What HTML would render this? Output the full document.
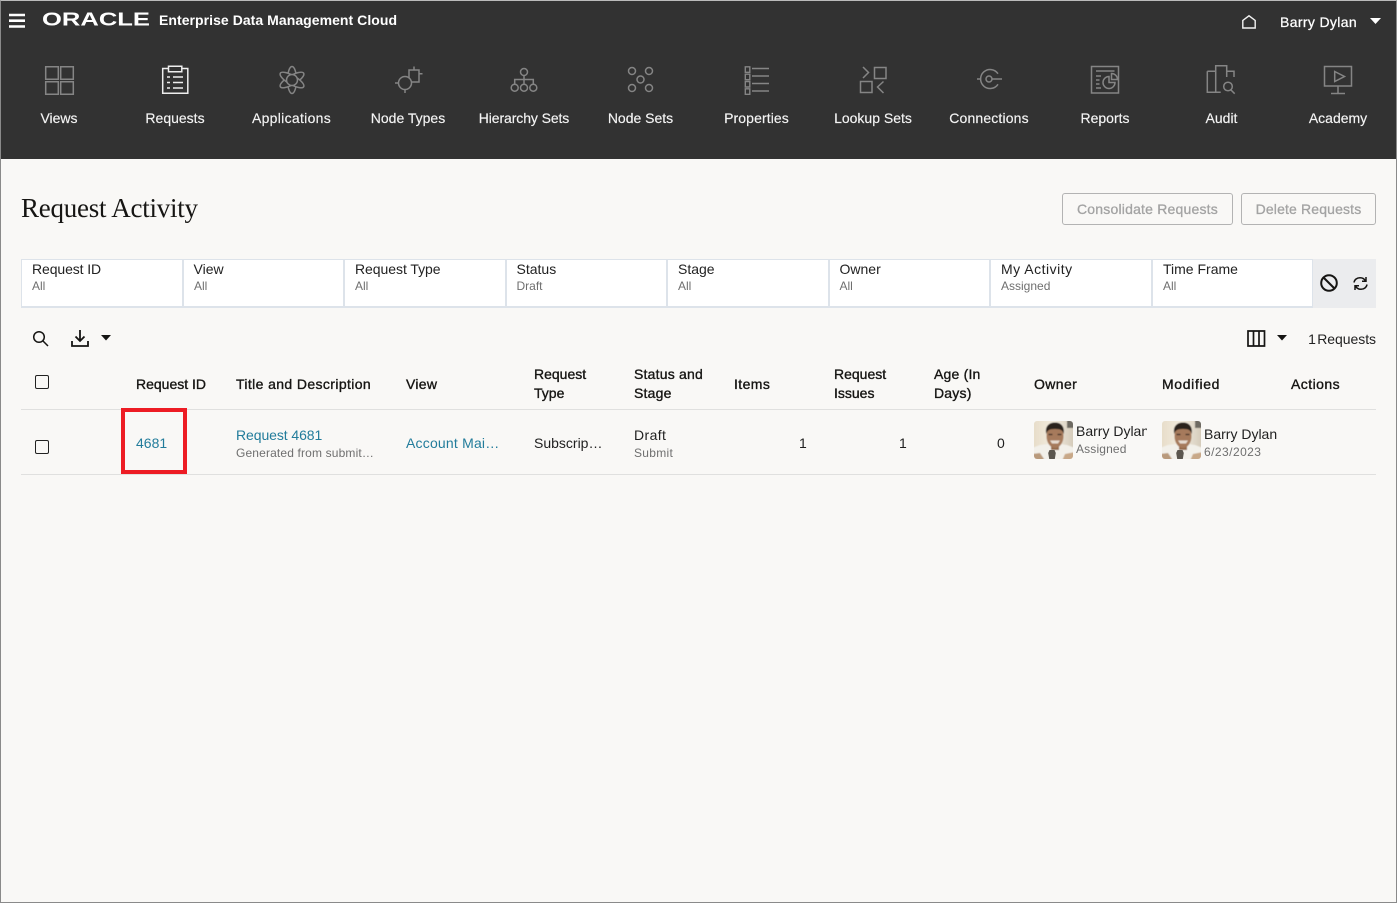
<!DOCTYPE html>
<html lang="en"><head><meta charset="utf-8"><title>Request Activity</title>
<style>
html,body{margin:0;padding:0;width:1397px;height:903px;overflow:hidden;background:#f9f8f6}
body{position:relative;font-family:"Liberation Sans",sans-serif;font-size:14px;color:#1f1f1f}
#frame{position:absolute;inset:0;border:1px solid #8a8a8a;border-top:1px solid #bbb;box-sizing:border-box;pointer-events:none;z-index:9}
#hdr{position:absolute;left:0;top:0;width:1397px;height:159px;background:#323232}
.t{position:absolute;white-space:nowrap;line-height:16px}
.w{color:#fff}
.c{transform:translateX(-50%)}
.nav{top:110px;color:#f4f4f4;font-size:14px;-webkit-text-stroke:.15px #f4f4f4}
svg{position:absolute;overflow:visible}
.ic{width:30px;height:30px;top:65px;fill:none;stroke:#858585;stroke-width:1.5}
.cell{position:absolute;top:259px;height:49px;background:#fff;border:1px solid #dde3ea;border-width:1px 1px 2px 1px;box-sizing:border-box}
.lb{top:261px;font-size:14px;color:#222}
.sb{top:278px;font-size:12px;color:#6f6f6f}
.h{font-size:14px;color:#161513;-webkit-text-stroke:.35px #161513}
.lnk{color:#227c9b}
.sub{font-size:12px;color:#6f6f6f;letter-spacing:.15px}
.btn{position:absolute;top:193px;height:32px;border:1px solid #b3b3b3;border-radius:3px;box-sizing:border-box;color:#a3a3a3;text-align:center;line-height:30px;font-size:14px;-webkit-text-stroke:.3px #a3a3a3}
.rule{position:absolute;left:21px;width:1355px;height:1px;background:#e0e0df}
.cb{position:absolute;left:35px;width:14px;height:14px;border:1.5px solid #222;border-radius:2px;box-sizing:border-box}
.clip{overflow:hidden}
</style></head><body>
<div id="hdr"></div>

<svg style="left:9px;top:13px" width="16" height="15"><path d="M0 2h16M0 7.700h16M0 13.500h16" stroke="#fff" stroke-width="2.600" fill="none"/></svg>
<svg style="left:42px;top:10px" width="110" height="18"><text x="0" y="15.500" font-family="Liberation Sans" font-weight="bold" font-size="18.500" fill="#fff" textLength="108" lengthAdjust="spacingAndGlyphs">ORACLE</text></svg>
<span class="t w" style="left:159px;top:12px;font-weight:bold;font-size:14px;letter-spacing:.05px">Enterprise Data Management Cloud</span>

<svg style="left:1242px;top:15px" width="14" height="14" fill="none" stroke="#f2f2f2" stroke-width="1.400"><path d="M.8 13V5.500L7 .8l6.200 4.700V13z"/></svg>
<span class="t w" style="left:1280px;top:14px;letter-spacing:.35px;-webkit-text-stroke:.25px #fff">Barry Dylan</span>
<svg style="left:1370px;top:18px" width="12" height="7"><path d="M0 0h11L5.500 6z" fill="#fff"/></svg>

<!-- nav icons -->
<svg class="ic" style="left:44px" viewBox="0 0 30 30"><path d="M1.700 1.700h12.600v12.600H1.700zM16.700 1.700h12.600v12.600H16.700zM1.700 16.700h12.600v12.600H1.700zM16.700 16.700h12.600v12.600H16.700z"/></svg>
<svg class="ic" style="left:160px;stroke:#eee" viewBox="0 0 30 30"><path d="M8.500 3.500H2.700v24.800h25.100V3.500h-5.800"/><path d="M8.500 1.200h13.300v5.600H8.500zM7 12h3M13 12h10M7 17.500h3M13 17.500h10M7 23h3M13 23h10"/></svg>
<svg class="ic" style="left:277px;fill:#323232" viewBox="0 0 30 30"><ellipse cx="15" cy="15" rx="4.500" ry="13.500"/><ellipse cx="15" cy="15" rx="4.500" ry="13.500" transform="rotate(60 15 15)"/><ellipse cx="15" cy="15" rx="4.500" ry="13.500" transform="rotate(120 15 15)"/><circle cx="15" cy="15" r="5.500"/></svg>
<svg class="ic" style="left:393px" viewBox="0 0 30 30"><circle cx="12" cy="18" r="6.500"/><path d="M2 18h3.500M12 24.500V28M16 13V5h10v12h-7M21 1.500V5M26 8.800h3.500"/></svg>
<svg class="ic" style="left:509px" viewBox="0 0 30 30"><circle cx="15" cy="7" r="3.500"/><circle cx="5.700" cy="22.700" r="3.500"/><circle cx="15" cy="22.700" r="3.500"/><circle cx="24.300" cy="22.700" r="3.500"/><path d="M15 10.500v8.700M5.700 19.200v-4.700h18.600v4.700"/></svg>
<svg class="ic" style="left:625px" viewBox="0 0 30 30"><circle cx="7" cy="6" r="3.500"/><circle cx="24" cy="6" r="3.500"/><circle cx="15.500" cy="14.500" r="3.500"/><circle cx="7" cy="23" r="3.500"/><circle cx="24" cy="23" r="3.500"/></svg>
<svg class="ic" style="left:742px" viewBox="0 0 30 30"><path d="M3.300 1.800h4.500v5.500H3.300zM3.300 9.200h4.500v5.500H3.300zM3.300 16.500h4.500V22H3.300zM3.300 23.800h4.500v5.500H3.300zM10 3.500h17M10 11h17M10 18.500h17M10 26h17" stroke-width="1.400"/></svg>
<svg class="ic" style="left:858px" viewBox="0 0 30 30"><path d="M16.500 2.500h11.500v11H16.500zM2.500 16.500h11.500v11H2.500zM5 2l5.500 5.500L5 13M25.500 16.500L19.500 22l6 6"/></svg>
<svg class="ic" style="left:974px" viewBox="0 0 30 30"><circle cx="15" cy="14" r="3"/><path d="M24 8.700A9.500 9.500 0 1 0 24 19.300M18 14h10M3 14h3"/></svg>
<svg class="ic" style="left:1090px" viewBox="0 0 30 30"><path d="M1.500 1.500h27v26.500h-27zM6 6h18.500M6 11h5M6 15h3.500M6 19h3.500M6 23h5"/><path d="M19 11.500a6 6 0 1 0 6 6h-6z"/><path d="M21.500 8.500v6h6a6 6 0 0 0-6-6z"/></svg>
<svg class="ic" style="left:1206px" viewBox="0 0 30 30"><path d="M1.300 6.300H9.700M1.300 6.300V27.300H14.700M9.700 27.300V.7H20.700V12M20.700 6.300H28V12"/><circle cx="22" cy="21.500" r="4.300"/><path d="M25 25l3.700 3.700"/></svg>
<svg class="ic" style="left:1323px" viewBox="0 0 30 30"><path d="M1.500 1.500h27v19.500h-27zM11.700 6.500l9.800 5-9.800 5zM15 21v7.500M8 28.500h14"/></svg>

<span class="t nav c" style="left:59px">Views</span>
<span class="t nav c" style="left:175px">Requests</span>
<span class="t nav c" style="left:291.500px;letter-spacing:.3px">Applications</span>
<span class="t nav c" style="left:408px">Node Types</span>
<span class="t nav c" style="left:524px;letter-spacing:-.1px">Hierarchy Sets</span>
<span class="t nav c" style="left:640.500px">Node Sets</span>
<span class="t nav c" style="left:756.500px;letter-spacing:.1px">Properties</span>
<span class="t nav c" style="left:873px">Lookup Sets</span>
<span class="t nav c" style="left:989px;letter-spacing:.15px">Connections</span>
<span class="t nav c" style="left:1105px">Reports</span>
<span class="t nav c" style="left:1221.500px">Audit</span>
<span class="t nav c" style="left:1338px">Academy</span>

<!-- title -->
<span class="t" style="left:21px;top:193px;line-height:30px;font-family:'Liberation Serif',serif;font-size:27px;letter-spacing:-.25px;color:#161513">Request Activity</span>
<div class="btn" style="left:1062px;width:171px;letter-spacing:.2px">Consolidate Requests</div>
<div class="btn" style="left:1241px;width:135px;letter-spacing:.15px">Delete Requests</div>

<!-- filter bar -->
<div style="position:absolute;left:1313px;top:259px;width:63px;height:49px;background:#ebecee"></div>
<div class="cell" style="left:21px;width:162px"></div>
<div class="cell" style="left:183px;width:161px"></div>
<div class="cell" style="left:344px;width:162px"></div>
<div class="cell" style="left:506px;width:161px"></div>
<div class="cell" style="left:667px;width:162px"></div>
<div class="cell" style="left:829px;width:161px"></div>
<div class="cell" style="left:990px;width:162px"></div>
<div class="cell" style="left:1152px;width:161px"></div>

<span class="t lb" style="left:32px;letter-spacing:-.1px">Request ID</span><span class="t sb" style="left:32px">All</span>
<span class="t lb" style="left:193.500px">View</span><span class="t sb" style="left:194px">All</span>
<span class="t lb" style="left:355px;letter-spacing:-.05px">Request Type</span><span class="t sb" style="left:355px">All</span>
<span class="t lb" style="left:516.500px">Status</span><span class="t sb" style="left:516.500px">Draft</span>
<span class="t lb" style="left:678px">Stage</span><span class="t sb" style="left:678px">All</span>
<span class="t lb" style="left:839.500px">Owner</span><span class="t sb" style="left:839.500px">All</span>
<span class="t lb" style="left:1001px;letter-spacing:.5px">My Activity</span><span class="t sb" style="left:1001px">Assigned</span>
<span class="t lb" style="left:1163px">Time Frame</span><span class="t sb" style="left:1163px">All</span>

<svg style="left:1320px;top:274px" width="18" height="18" fill="none" stroke="#161513" stroke-width="2"><circle cx="9" cy="9" r="7.800"/><path d="M3.500 3.500l11 11"/></svg>
<svg style="left:1353px;top:276px" width="15" height="15" fill="none" stroke="#161513" stroke-width="1.500"><path d="M1 6.500C1.500 3.500 4 1.700 7 1.700c2.500 0 4.500 1.200 5.500 3.300M13 1v4.300H9M14 8.500c-.5 3-3 4.800-6 4.800-2.500 0-4.500-1.200-5.500-3.300M2 14V9.700h4"/></svg>

<!-- toolbar -->
<svg style="left:32px;top:330px" width="17" height="17" fill="none" stroke="#161513" stroke-width="1.500"><circle cx="7" cy="7" r="5.300"/><path d="M11 11l5 5"/></svg>
<svg style="left:71px;top:329px" width="18" height="18" fill="none" stroke="#161513" stroke-width="1.800"><path d="M9 1v11M4.500 7.500L9 12l4.500-4.500M1 12v5h16v-5"/></svg>
<svg style="left:101px;top:335px" width="10" height="6"><path d="M0 0h10L5 5.500z" fill="#161513"/></svg>
<svg style="left:1247px;top:330px" width="19" height="17" fill="none" stroke="#161513" stroke-width="1.700"><path d="M1 1h16.500v15H1zM6.500 1v15M12 1v15"/></svg>
<svg style="left:1277px;top:335px" width="10" height="6"><path d="M0 0h10L5 5.500z" fill="#161513"/></svg>
<span class="t" style="right:21px;top:331px;color:#222;word-spacing:-2.500px;letter-spacing:-.05px">1 Requests</span>

<!-- table -->
<div class="cb" style="top:375px"></div>
<span class="t h" style="left:136px;top:376px">Request ID</span>
<span class="t h" style="left:236px;top:376px;letter-spacing:.38px">Title and Description</span>
<span class="t h" style="left:406px;top:376px;letter-spacing:.3px">View</span>
<span class="t h" style="left:534px;top:365px;line-height:19px">Request<br>Type</span>
<span class="t h" style="left:634px;top:365px;line-height:19px;letter-spacing:.2px">Status and<br>Stage</span>
<span class="t h" style="left:734px;top:376px;letter-spacing:.4px">Items</span>
<span class="t h" style="left:834px;top:365px;line-height:19px">Request<br>Issues</span>
<span class="t h" style="left:934px;top:365px;line-height:19px;letter-spacing:.2px">Age (In<br>Days)</span>
<span class="t h" style="left:1034px;top:376px;letter-spacing:.4px">Owner</span>
<span class="t h" style="left:1162px;top:376px;letter-spacing:.65px">Modified</span>
<span class="t h" style="left:1291px;top:376px;letter-spacing:.45px">Actions</span>
<div class="rule" style="top:409px"></div>
<div class="rule" style="top:474px"></div>

<div class="cb" style="top:440px"></div>
<span class="t lnk" style="left:136px;top:435px">4681</span>
<div style="position:absolute;left:121px;top:408px;width:66px;height:66px;border:4.500px solid #ed1c24;box-sizing:border-box"></div>
<span class="t lnk" style="left:236px;top:427px;letter-spacing:-.08px">Request 4681</span>
<span class="t sub" style="left:236px;top:445px">Generated from submit…</span>
<span class="t lnk" style="left:406px;top:435px;letter-spacing:.2px">Account Mai…</span>
<span class="t" style="left:534px;top:435px">Subscrip…</span>
<span class="t" style="left:634px;top:427px;letter-spacing:.4px">Draft</span>
<span class="t sub" style="left:634px;top:445px;letter-spacing:.3px">Submit</span>
<span class="t" style="left:799px;top:435px">1</span>
<span class="t" style="left:899px;top:435px">1</span>
<span class="t" style="left:997px;top:435px">0</span>

<svg width="0" height="0" style="position:absolute"><defs>
<linearGradient id="bgp" x1="0" y1="0" x2="1" y2="0"><stop offset="0" stop-color="#e6dcc8"/><stop offset=".5" stop-color="#f3ecdf"/><stop offset="1" stop-color="#d2c9b8"/></linearGradient>
<clipPath id="rr"><rect width="39" height="38" rx="3"/></clipPath>
<filter id="soft" x="-5%" y="-5%" width="110%" height="110%"><feGaussianBlur stdDeviation=".55"/></filter>
<g id="person"><g clip-path="url(#rr)"><g filter="url(#soft)"><rect x="-2" y="-2" width="43" height="42" fill="url(#bgp)"/><path d="M33 -2h8v9h-8z" fill="#6e6a62"/><path d="M-2 40V27l8-3 8-1 6 4 6-4 7 1 8 3v13z" fill="#f2f0ea"/><path d="M-2 33l8-1 4 6v2H-2z" fill="#b99a7c"/><path d="M31 33l10-2v9H28z" fill="#c8a888"/><rect x="17" y="22" width="8" height="7" fill="#94694c"/><ellipse cx="21" cy="15" rx="8.500" ry="12" fill="#a67a5c"/><path d="M12.300 13C10.500 5 15.500 1.500 21 1.500S31 5 29.700 13c-1-3.500-2.500-5-8.700-5s-7.700 1.500-8.700 5z" fill="#2a221e"/><path d="M16 19.500h10l-2 3h-6z" fill="#e7dbd0"/><path d="M14.500 13.500h4M23.500 13.500h4" stroke="#3a2a22" stroke-width="1.200"/></g><path d="M15.500 29h5l1.300 3-1 6h-5.600l-1-6z" fill="#5b564e"/></g></g>
</defs></svg>

<svg style="left:1034px;top:421px" width="39" height="38"><use href="#person"/></svg>
<div class="t clip" style="left:1076px;top:423px;width:71px">Barry Dylan</div>
<span class="t sub" style="left:1076px;top:441px">Assigned</span>
<svg style="left:1162px;top:421px" width="39" height="38"><use href="#person"/></svg>
<div class="t clip" style="left:1204px;top:426px;width:73px">Barry Dylan</div>
<span class="t sub" style="left:1204px;top:444px;letter-spacing:.45px">6/23/2023</span>

<div id="frame"></div>
</body></html>
